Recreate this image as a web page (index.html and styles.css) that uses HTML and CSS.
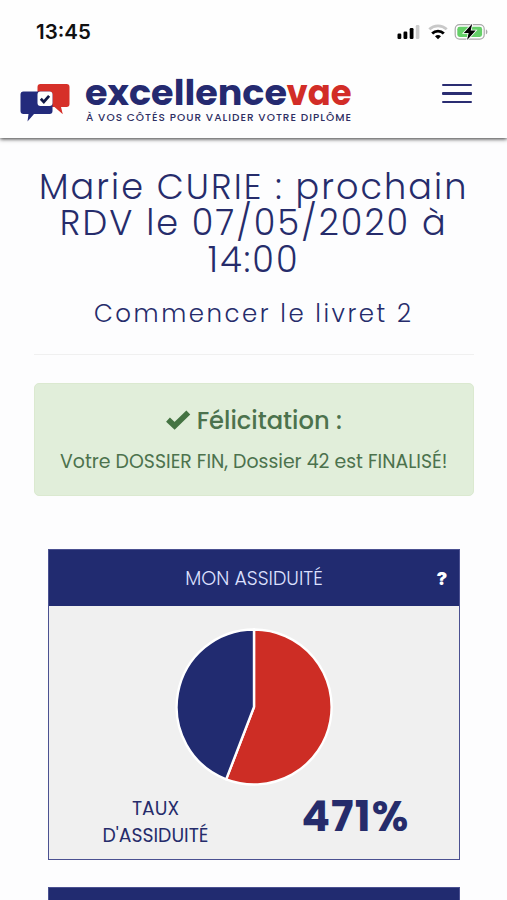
FILE: index.html
```html
<!DOCTYPE html>
<html lang="fr">
<head>
<meta charset="utf-8">
<meta name="viewport" content="width=device-width, initial-scale=1">
<title>Excellence VAE</title>
<link rel="stylesheet" href="styles.css">
</head>
<body>
<header class="header">
  <div class="status">
    <span class="time">13:45</span>
    <svg class="status-icons" width="92" height="20" viewBox="0 0 92 20">
      <g fill="#000"><rect x="0.5" y="11.5" width="3.8" height="5.5" rx="1.2"/><rect x="6.5" y="9.5" width="3.8" height="7.5" rx="1.2"/><rect x="12.7" y="6" width="3.8" height="11" rx="1.2"/></g>
      <rect x="18.8" y="3" width="3.6" height="14" rx="1.2" fill="#ccc"/>
      <path d="M32.3 7.3a12.6 12.6 0 0 1 17.4 0" fill="none" stroke="#c8c8c8" stroke-width="2.8"/>
      <path d="M35.2 11.6a8.2 8.2 0 0 1 11.6 0" fill="none" stroke="#000" stroke-width="2.8"/>
      <path d="M41 17.300l-3-3a4.500 4.500 0 0 1 6 0z"/>
      <rect x="58.2" y="2.700" width="29" height="14.400" rx="4.300" fill="#fff" stroke="#a9a9a9" stroke-width="1.200"/>
      <rect x="60.3" y="4.800" width="24.800" height="10.200" rx="2.400" fill="#65cf68"/>
      <path d="M88.900 7.500c2 .6 2 4.200 0 4.800z" fill="#a9a9a9"/>
      <path d="M75.200 1.800L66.800 11h4.800l-1.500 7 8.600-9.400h-5z" fill="#000" stroke="#fff" stroke-width="1.600" paint-order="stroke"/>
    </svg>
  </div>
  <div class="bar">
    <svg class="logo" width="336" height="50" viewBox="0 0 336 50" role="img" aria-label="excellencevae">
      <path d="M20.500 9h26a3 3 0 0 1 3 3v17a3 3 0 0 1-3 3h-5.500l1.800 7.300L34.500 32H20.500a3 3 0 0 1-3-3V12a3 3 0 0 1 3-3z" fill="#d63029"/>
      <path d="M3.500 16.500h26a3 3 0 0 1 3 3V36a3 3 0 0 1-3 3H14L7.500 46.500 8.500 39H3.500a3 3 0 0 1-3-3V19.500a3 3 0 0 1 3-3z" fill="#232b7c"/>
      <path d="M20.500 16.500h9a3 3 0 0 1 3 3V28a3 3 0 0 1-3 3h-9a3 3 0 0 1-3-3v-8.500a3 3 0 0 1 3-3z" fill="#fff"/>
      <path d="M20.800 23.800l3 3.100 5.300-6" fill="none" stroke="#111846" stroke-width="2.800"/>
      <text class="wordmark" x="65" y="29.800" textLength="202" lengthAdjust="spacingAndGlyphs" fill="#252a70">excellence</text>
      <text class="wordmark" x="266.500" y="29.800" textLength="65" lengthAdjust="spacingAndGlyphs" fill="#d22d27">vae</text>
      <text class="tagline" x="66" y="45.800" textLength="265" fill="#2e2f63">À VOS CÔTÉS POUR VALIDER VOTRE DIPLÔME</text>
    </svg>
    <div class="burger"><i></i><i></i><i></i></div>
  </div>
</header>
<main class="main">
  <h1 class="title">Marie CURIE : prochain<br>RDV le 07/05/2020 à<br>14:00</h1>
  <h2 class="subtitle">Commencer le livret 2</h2>
  <div class="alert">
    <div class="alert-title">
      <svg width="25" height="21" viewBox="0 0 25 21"><path d="M2 9.600L8.600 15.800 22.300 2.600" fill="none" stroke="#447342" stroke-width="5.600"/></svg>
      <span>Félicitation :</span>
    </div>
    <p class="alert-text">Votre DOSSIER FIN, Dossier 42 est FINALISÉ!</p>
  </div>
  <section class="card">
    <div class="card-head"><span></span><span class="card-title">MON ASSIDUITÉ</span><b class="help">?</b></div>
    <div class="card-body">
      <svg class="pie" width="158" height="158" viewBox="-79 -79 158 158" stroke="#fff" stroke-width="2.400">
        <path d="M0 0V-77.500A77.500 77.500 0 1 1-27.800 72.300Z" fill="#cd2d25"/>
        <path d="M0 0L-27.800 72.300A77.500 77.500 0 0 1 0-77.500Z" fill="#212b70"/>
      </svg>
      <div class="stats">
        <div class="label">TAUX<br>D'ASSIDUITÉ</div>
        <div class="value">471%</div>
      </div>
    </div>
  </section>
  <section class="card next"></section>
</main>
</body>
</html>
```
FILE: styles.css
```css
* { box-sizing: border-box; }
body {
  margin: 0;
  height: 900px;
  overflow: hidden;
  background: #fdfdfe;
  color: #262c6b;
  font-family: Poppins, Inter, sans-serif;
}
.header {
  height: 138px;
  background: #fefefe;
  box-shadow: 0 1px 4px rgba(0, 0, 0, .8);
}
.status {
  display: flex;
  justify-content: space-between;
  align-items: center;
  height: 63px;
  padding: 0 18px 0 36px;
}
.time { font-family: Inter, sans-serif; font-size: 20.5px; font-weight: 600; color: #111; }
.status-icons { display: block; }
.bar {
  display: flex;
  justify-content: space-between;
  padding: 12px 35px 0 20px;
}
.logo { overflow: visible; }
.wordmark { font-size: 34.5px; font-weight: 700; }
.tagline { font-size: 10.5px; font-weight: 500; }
.burger { display: flex; flex-direction: column; gap: 6px; padding-top: 9px; }
.burger i { width: 30px; height: 2.4px; border-radius: 1px; background: #2a2d72; }
.main { padding: 31px 33.5px 0 34px; }
.title {
  margin: 0 -10px;
  font-size: 35px;
  font-weight: 300;
  line-height: 36.3px;
  text-align: center;
  white-space: nowrap;
  letter-spacing: 2.1px;
}
.subtitle {
  margin: 20.1px 0 0;
  padding-bottom: 24.4px;
  border-bottom: 1px solid #f0f0f0;
  font-size: 24.5px;
  font-weight: 300;
  line-height: 32px;
  text-align: center;
  letter-spacing: 2.5px;
}
.alert {
  height: 113.5px;
  margin-top: 27.2px;
  padding-top: 19.8px;
  border: 1px solid #dbe9d0;
  border-radius: 5px;
  background: #e1eeda;
  color: #4c724d;
}
.alert-title {
  display: flex;
  justify-content: center;
  align-items: center;
  gap: 6px;
  height: 34px;
  font-size: 24.2px;
  font-weight: 500;
}
.alert-text {
  margin: 10.5px 0 0;
  font-size: 18.9px;
  line-height: 28px;
  text-align: center;
  white-space: nowrap;
}
.card {
  height: 310.5px;
  margin: 53.4px 13.5px 0 14px;
  border: 1.5px solid #4b5191;
  background: #f0f0f0;
}
.card-head {
  display: grid;
  grid-template-columns: 34px 1fr 34px;
  align-items: center;
  height: 55.5px;
  background: #212b70;
  color: #dde0ff;
  text-align: center;
}
.card-title { font-size: 19px; font-weight: 300; }
.help { font-family: Inter, sans-serif; font-size: 18px; font-weight: 900; color: #fff; }
.card-body { padding-top: 22px; }
.pie { display: block; margin: 0 auto; }
.stats { display: grid; grid-template-columns: 1fr 1fr; padding-top: 9px; text-align: center; }
.label { font-size: 18.8px; line-height: 27px; padding-left: 8px; }
.value { font-size: 42px; font-weight: 700; line-height: 44px; letter-spacing: 1.2px; margin-right: 2px; }
.next { height: 40px; margin-top: 27px; background: #212b70; }
```
